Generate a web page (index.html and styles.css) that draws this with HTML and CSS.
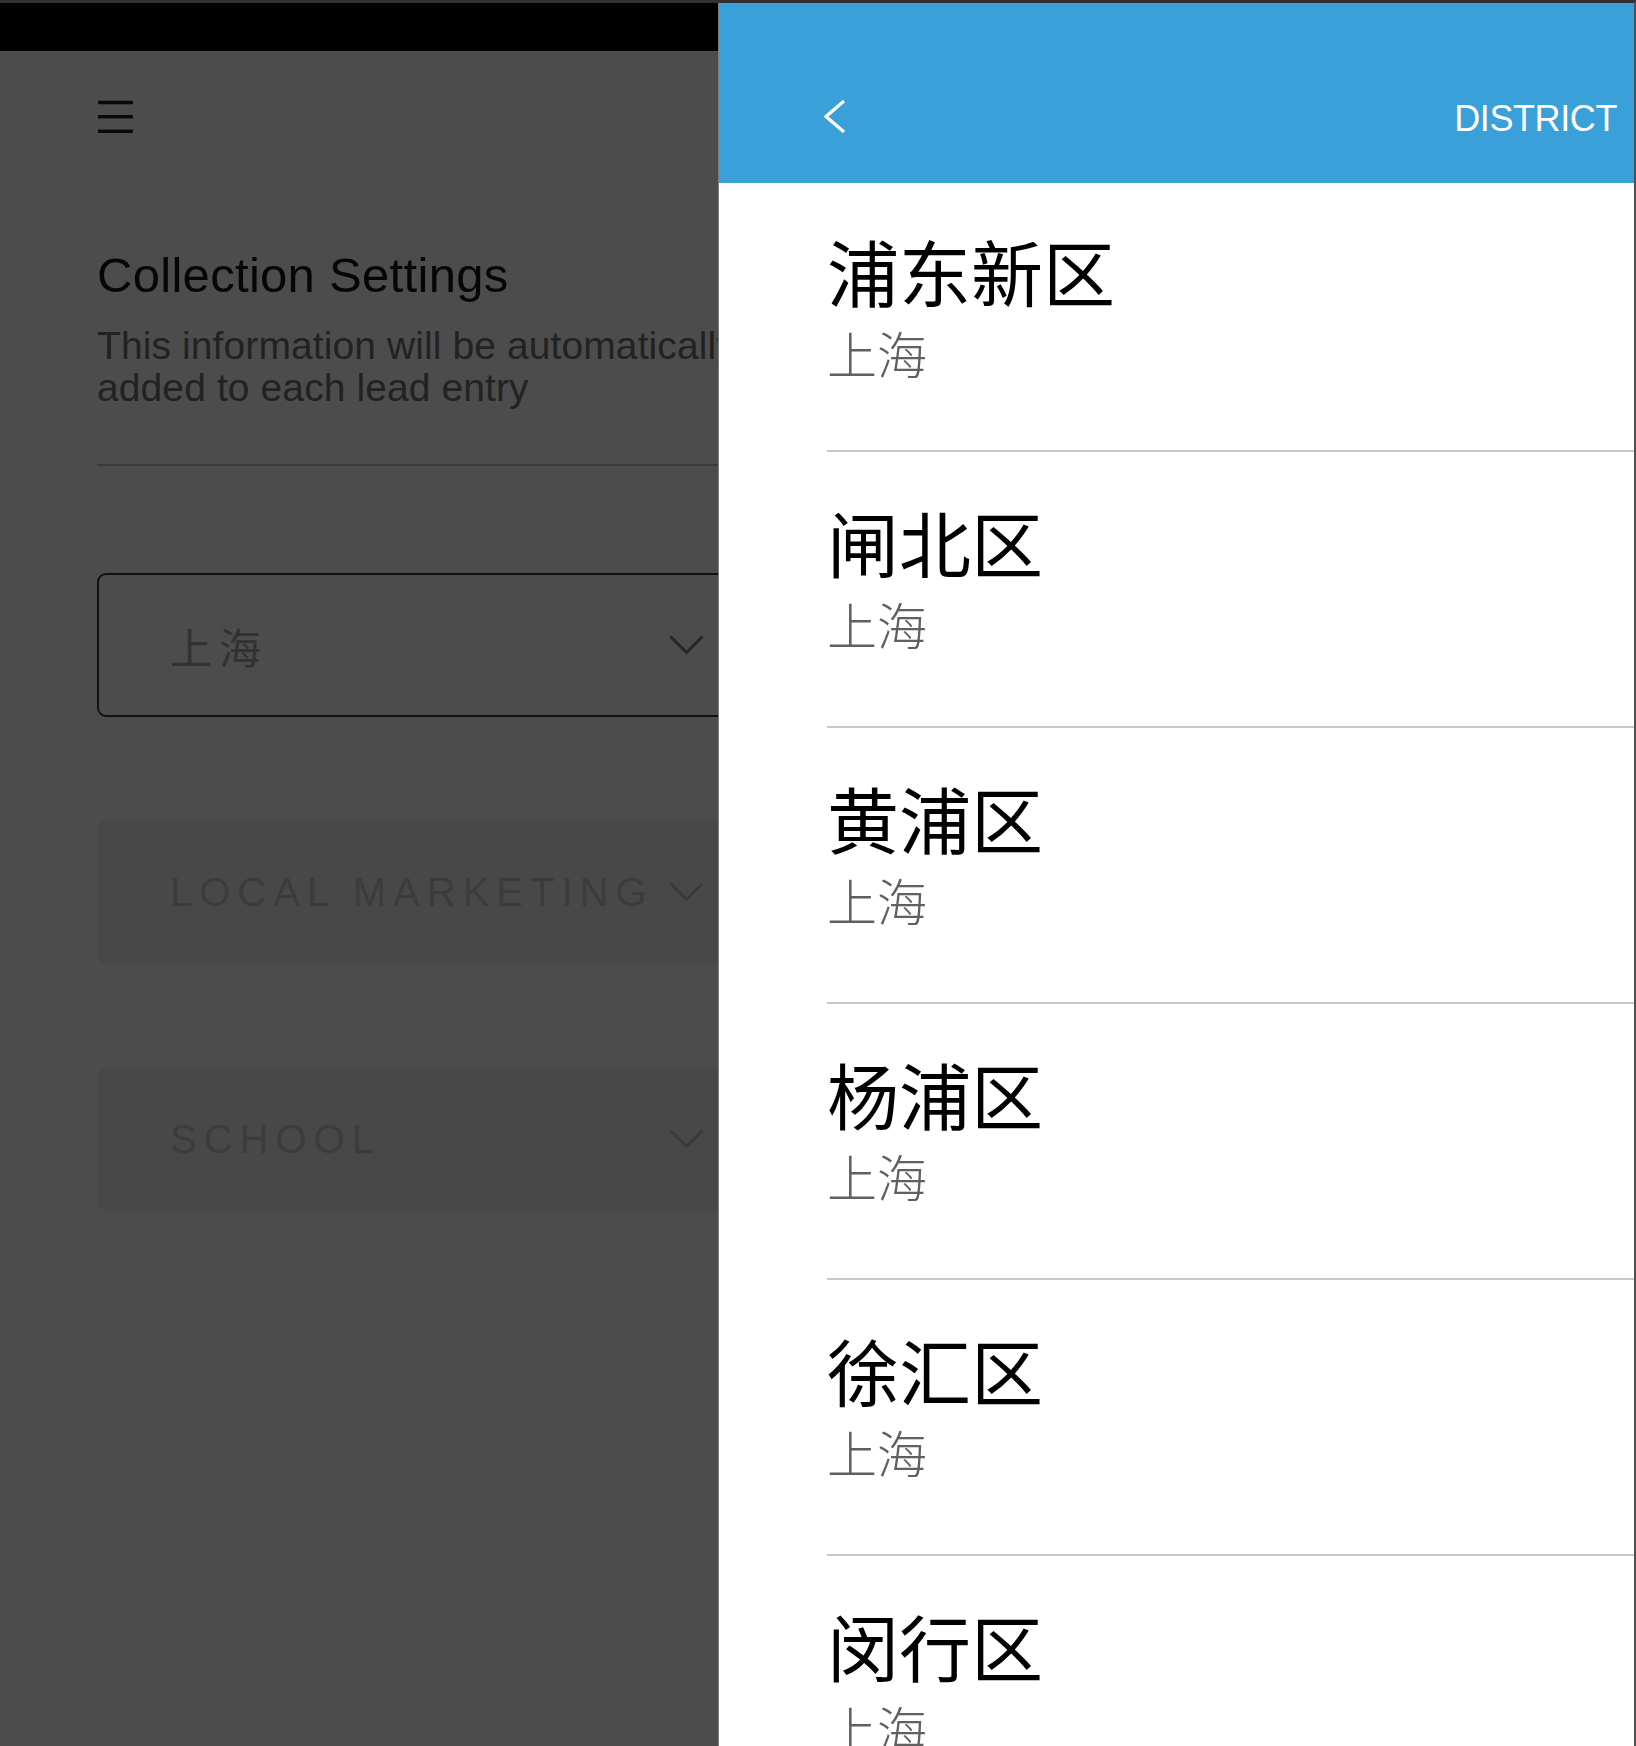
FILE: index.html
```html
<!DOCTYPE html>
<html lang="zh-CN">
<head>
<meta charset="utf-8">
<title>District</title>
<link rel="stylesheet" href="styles.css">
</head>
<body>
<div class="screen">
  <main class="page">
    <div class="status-bar"></div>
    <nav class="top-nav">
      <svg class="menu-icon" width="37" height="34" viewBox="0 0 37 34" aria-hidden="true">
        <path d="M1 2.5H36M1 16.8H36M1 31.3H36" stroke="currentColor" stroke-width="3.5" fill="none"/>
      </svg>
    </nav>
    <section class="settings">
      <h1 class="settings-title">Collection Settings</h1>
      <p class="settings-desc">This information will be automatically added to each lead entry</p>
      <hr class="divider">
      <div class="field field-select">
        <span class="field-value">上海</span>
        <svg class="chevron" width="35" height="20" viewBox="0 0 35 20" aria-hidden="true">
          <path d="M1.5 1.5L17.5 17.5L33.5 1.5" stroke="currentColor" stroke-width="3" fill="none"/>
        </svg>
      </div>
      <div class="field field-disabled">
        <span class="field-label">LOCAL MARKETING</span>
        <svg class="chevron" width="35" height="20" viewBox="0 0 35 20" aria-hidden="true">
          <path d="M1.5 1.5L17.5 17.5L33.5 1.5" stroke="currentColor" stroke-width="3" fill="none"/>
        </svg>
      </div>
      <div class="field field-disabled">
        <span class="field-label">SCHOOL</span>
        <svg class="chevron" width="35" height="20" viewBox="0 0 35 20" aria-hidden="true">
          <path d="M1.5 1.5L17.5 17.5L33.5 1.5" stroke="currentColor" stroke-width="3" fill="none"/>
        </svg>
      </div>
    </section>
    <div class="scrim"></div>
  </main>

  <aside class="drawer">
    <header class="drawer-header">
      <div class="drawer-nav">
        <button class="back-btn" aria-label="Back">
          <svg width="22" height="36" viewBox="0 0 22 36" aria-hidden="true">
            <path d="M20 2L2 17.5L20 33" stroke="currentColor" stroke-width="3.2" fill="none"/>
          </svg>
        </button>
        <h2 class="drawer-title">DISTRICT</h2>
      </div>
    </header>
    <ul class="district-list">
      <li class="district"><div class="district-name">浦东新区</div><div class="district-city">上海</div></li>
      <li class="district"><div class="district-name">闸北区</div><div class="district-city">上海</div></li>
      <li class="district"><div class="district-name">黄浦区</div><div class="district-city">上海</div></li>
      <li class="district"><div class="district-name">杨浦区</div><div class="district-city">上海</div></li>
      <li class="district"><div class="district-name">徐汇区</div><div class="district-city">上海</div></li>
      <li class="district"><div class="district-name">闵行区</div><div class="district-city">上海</div></li>
    </ul>
  </aside>
</div>
</body>
</html>
```

FILE: styles.css
```css
* {
  box-sizing: border-box;
}

html,
body {
  margin: 0;
  height: 100%;
}

body {
  background: #2f2f2f;
  overflow: hidden;
  font-family: "Liberation Sans", Arial, sans-serif;
}

.screen {
  position: relative;
  width: 1636px;
  height: 1746px;
  border-top: 3px solid #303030;
  border-right: 2px solid #4f4f4f;
  overflow: hidden;
  background: #fff;
}

/* underlying settings page */
.page {
  position: relative;
  height: 100%;
  background: #fff;
}

.status-bar {
  height: 48px;
  background: #000;
}

.top-nav {
  height: 132px;
  display: flex;
  align-items: center;
  padding-left: 97px;
  color: #222;
}

.settings {
  width: 680px;
  margin-left: 97px;
}

.settings-title {
  margin: 64px 0 0;
  font-size: 49px;
  line-height: 56px;
  font-weight: 400;
  letter-spacing: 0.3px;
  color: #151515;
}

.settings-desc {
  margin: 22px 0 0;
  font-size: 39px;
  line-height: 42px;
  letter-spacing: 0.1px;
  color: #727272;
}

.divider {
  margin: 55px 0 0;
  height: 2px;
  border: 0;
  background: #c0c0c0;
}

.field {
  display: flex;
  align-items: center;
  justify-content: space-between;
  height: 144px;
  margin-top: 103px;
  padding: 0 71px;
  border: 2px solid transparent;
  border-radius: 9px;
}

.field-select {
  margin-top: 107px;
  border-color: #3a3a3a;
}

.field-value {
  font-family: "Noto Sans CJK SC", sans-serif;
  font-size: 42px;
  letter-spacing: 7px;
  color: #a8a8a8;
}

.field-disabled {
  background: #f2f2f2;
}

.field-label {
  font-size: 40px;
  letter-spacing: 7px;
  color: #c9c9c9;
  white-space: nowrap;
}

.chevron {
  flex: none;
}

.field-select .chevron {
  color: #808080;
}

.field-disabled .chevron {
  color: #c4c4c4;
}

.scrim {
  position: absolute;
  inset: 0;
  background: rgba(0, 0, 0, 0.7);
}

/* district drawer */
.drawer {
  position: absolute;
  top: 0;
  left: 718px;
  right: 0;
  bottom: 0;
  background: #fff;
  border-left: 1px solid #7d7d7d;
}

.drawer-header {
  height: 180px;
  padding-top: 48px;
  background: #3aa0da;
  color: #fff;
}

.drawer-nav {
  height: 132px;
  display: flex;
  align-items: center;
  padding: 0 17px 0 105px;
}

.back-btn {
  display: flex;
  padding: 0;
  border: 0;
  background: none;
  color: #fff;
}

.drawer-title {
  margin: 0 0 0 auto;
  padding-top: 3px;
  font-size: 36px;
  font-weight: 400;
  letter-spacing: -0.4px;
}

.district-list {
  list-style: none;
  margin: 0;
  padding: 0;
}

.district {
  margin-left: 108px;
  padding: 53px 0 78px;
  border-bottom: 2px solid #c8c8c8;
}

.district:first-child {
  padding: 51px 0 73px;
}

.district-name {
  font-family: "Noto Sans CJK SC", sans-serif;
  font-size: 72px;
  line-height: 72px;
  color: #000;
}

.district-city {
  margin-top: 21px;
  font-family: "Noto Sans CJK SC", sans-serif;
  font-size: 50px;
  line-height: 50px;
  font-weight: 300;
  color: #606060;
}
```
